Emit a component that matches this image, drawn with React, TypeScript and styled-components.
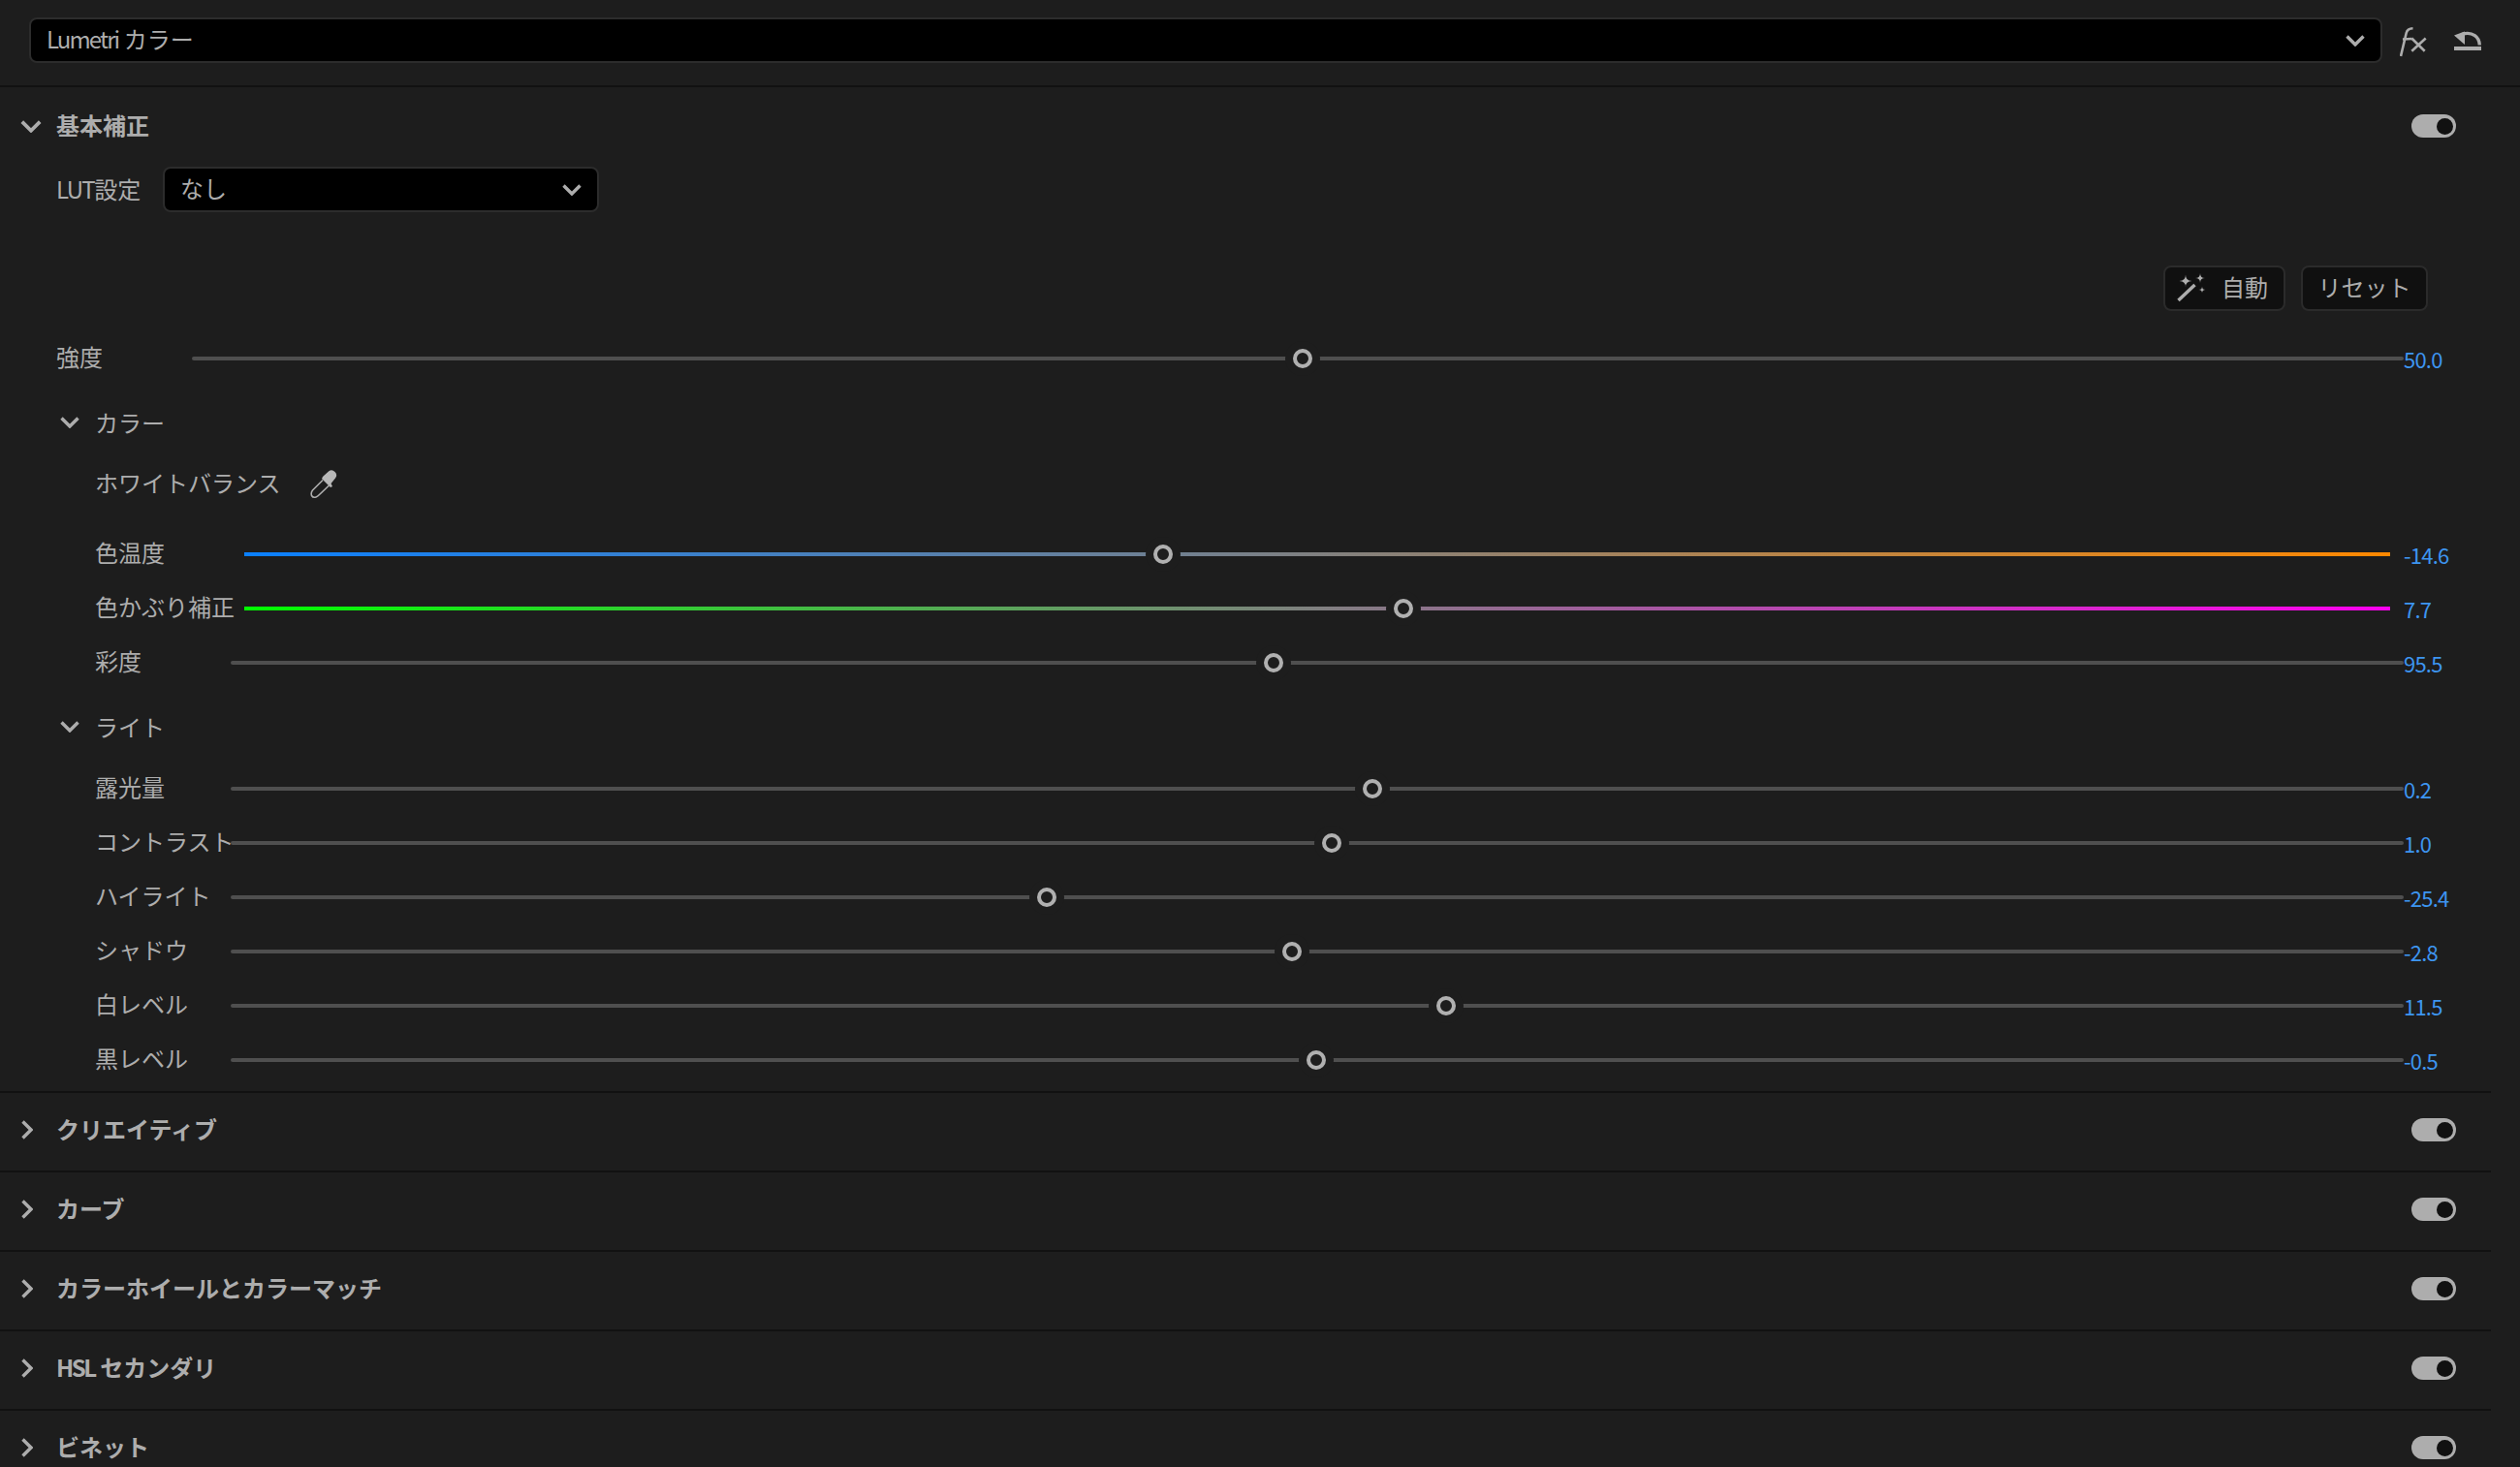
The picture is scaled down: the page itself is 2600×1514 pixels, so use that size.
import styled, { createGlobalStyle } from 'styled-components'

const GlobalStyle = createGlobalStyle`
    html, body {
        margin: 0;
        background: #1d1d1d;
    }
    body {
        font-family: "Noto Sans CJK JP", "Noto Sans", sans-serif;
        font-size: 24px;
        color: #adadad;
    }
`

const Panel = styled.div`
    width: 2600px;
    height: 1514px;
    overflow: hidden;
    background: #1d1d1d;
`

const Toolbar = styled.div`
    display: flex;
    align-items: center;
    height: 47px;
    padding: 18px 40px 23px 30px;
    border-bottom: 2px solid #111;
`

const Select = styled.div<{ $width?: number }>`
    display: flex;
    align-items: center;
    justify-content: space-between;
    box-sizing: border-box;
    height: 47px;
    flex: ${p => (p.$width ? `0 0 ${p.$width}px` : '1')};
    padding: 0 16px 0 16px;
    background: #000;
    border: 2px solid #2c2c2c;
    border-radius: 8px;
    line-height: 1;
`

const SelectText = styled.span`
    padding-bottom: 3px;
`

// latin runs are set narrower than the CJK font's own latin glyphs
const Latin = styled.span<{ $tight: number }>`
    letter-spacing: ${p => p.$tight}px;
`

const ToolIcons = styled.div`
    display: flex;
    align-items: center;
    gap: 28px;
    margin-left: 18px;
`

const FxIcon = styled.svg`
    display: block;
    width: 28px;
    height: 31px;
    margin-top: 4px;
    fill: none;
    stroke: #adadad;
    stroke-width: 2.6;
`

const UndoIcon = styled.svg`
    display: block;
    width: 28px;
    height: 20px;
`

const ChevronIcon = styled.svg<{ $w: number; $h: number }>`
    display: block;
    flex: none;
    width: ${p => p.$w}px;
    height: ${p => p.$h}px;
    fill: none;
    stroke: #adadad;
    stroke-width: 3.4;
`

const Section = styled.section`
    margin-right: 30px;
    padding-bottom: 4px;
    border-bottom: 2px solid #111;
`

const SectionHeader = styled.div<{ $closed?: boolean }>`
    display: flex;
    align-items: center;
    height: ${p => (p.$closed ? 76 : 80)}px;
    padding-right: 36px;
    padding-left: ${p => (p.$closed ? 22 : 21)}px;
    gap: ${p => (p.$closed ? 24 : 15)}px;
`

const SectionTitle = styled.div`
    flex: 1;
    font-weight: 700;
    line-height: 1;
    padding-bottom: 2px;
`

const Toggle = styled.div`
    display: flex;
    align-items: center;
    justify-content: flex-end;
    box-sizing: border-box;
    width: 46px;
    height: 24px;
    padding: 0 3.5px;
    background: #adadad;
    border-radius: 12px;
`

const ToggleKnob = styled.div`
    width: 17px;
    height: 17px;
    background: #111;
    border-radius: 50%;
`

const LutRow = styled.div`
    display: flex;
    align-items: center;
    margin-top: 2px;
    padding-left: 58px;
`

const LutLabel = styled.div`
    width: 110px;
    padding-bottom: 3px;
`

const ButtonRow = styled.div`
    display: flex;
    justify-content: flex-end;
    gap: 16px;
    margin-top: 55px;
    margin-bottom: 21px;
    padding-right: 65px;
`

const ActionButton = styled.div<{ $width: number; $right?: number }>`
    display: flex;
    align-items: center;
    justify-content: center;
    box-sizing: border-box;
    width: ${p => p.$width}px;
    height: 47px;
    padding-right: ${p => p.$right ?? 0}px;
    gap: 16px;
    background: #101010;
    border: 2px solid #2b2b2b;
    border-radius: 8px;
    line-height: 1;
`

const ButtonText = styled.span`
    padding-bottom: 3px;
`

const WandIcon = styled.svg`
    display: block;
    width: 30px;
    height: 32px;
    fill: #adadad;
`

const SliderRow = styled.div<{ $indent: number; $label: number }>`
    display: grid;
    grid-template-columns: ${p => p.$label}px 1fr 90px;
    align-items: center;
    height: 56px;
    padding-left: ${p => p.$indent}px;
`

const SliderLabel = styled.div`
    white-space: nowrap;
    line-height: 1;
    padding-bottom: 5px;
`

const Track = styled.div<{ $gradient?: string }>`
    position: relative;
    height: 4px;
    margin: ${p => (p.$gradient ? '0 14px' : '0')};
    background: ${p => p.$gradient ?? '#4f4f4f'};
    border-radius: ${p => (p.$gradient ? '0' : '2px')};
`

const Thumb = styled.div`
    position: absolute;
    top: 50%;
    box-sizing: border-box;
    width: 20px;
    height: 20px;
    margin: -10px 0 0 -10px;
    background: #1d1d1d;
    border: 4px solid #b0b0b0;
    border-radius: 50%;
    box-shadow: 0 0 0 8px #1d1d1d;
`

const SliderValue = styled.div`
    color: #3d95f0;
    font-size: 22px;
    letter-spacing: -0.8px;
    line-height: 1;
`

const GroupHeader = styled.div`
    display: flex;
    align-items: center;
    height: 56px;
    margin-top: 10px;
    padding-left: 62px;
    gap: 16px;
    line-height: 1;
`

const GroupText = styled.span`
    padding-bottom: 1px;
`

const WhiteBalanceRow = styled.div`
    display: flex;
    align-items: center;
    height: 56px;
    margin-top: 7px;
    padding-left: 98px;
    gap: 28px;
    line-height: 1;
`

const DropperIcon = styled.svg`
    display: block;
    width: 32px;
    height: 32px;
`

const SliderList = styled.div<{ $top: number }>`
    margin-top: ${p => p.$top}px;
`

const TEMP_GRADIENT = 'linear-gradient(90deg, #0a80ff 0%, #808080 50%, #ff8800 100%)'
const TINT_GRADIENT = 'linear-gradient(90deg, #00ff00 0%, #808080 50%, #ff00ee 100%)'

type SliderData = { label: string; value: string; pos: number; gradient?: string }

const colorSliders: SliderData[] = [
    { label: '色温度', value: '-14.6', pos: 0.4282, gradient: TEMP_GRADIENT },
    { label: '色かぶり補正', value: '7.7', pos: 0.5402, gradient: TINT_GRADIENT },
    { label: '彩度', value: '95.5', pos: 0.4799 },
]

const lightSliders: SliderData[] = [
    { label: '露光量', value: '0.2', pos: 0.5254 },
    { label: 'コントラスト', value: '1.0', pos: 0.5067 },
    { label: 'ハイライト', value: '-25.4', pos: 0.3757 },
    { label: 'シャドウ', value: '-2.8', pos: 0.4882 },
    { label: '白レベル', value: '11.5', pos: 0.5593 },
    { label: '黒レベル', value: '-0.5', pos: 0.4996 },
]

const closedSections = [
    { key: 'creative', title: 'クリエイティブ' },
    { key: 'curves', title: 'カーブ' },
    { key: 'wheels', title: 'カラーホイールとカラーマッチ' },
    { key: 'hsl', latin: 'HSL', title: ' セカンダリ' },
    { key: 'vignette', title: 'ビネット' },
]

const ChevronDown = ({ w = 20, h = 12 }: { w?: number; h?: number }) => (
    <ChevronIcon $w={w} $h={h} viewBox="0 0 20 12">
        <path d="M1.5 1.5 L10 10 L18.5 1.5" />
    </ChevronIcon>
)

const ChevronRight = () => (
    <ChevronIcon $w={12} $h={20} viewBox="0 0 12 20">
        <path d="M1.5 1.5 L10 10 L1.5 18.5" />
    </ChevronIcon>
)

const sparkle = (cx: number, cy: number, r: number) =>
    `M${cx} ${cy - r} Q${cx} ${cy} ${cx + r} ${cy} Q${cx} ${cy} ${cx} ${cy + r} Q${cx} ${cy} ${cx - r} ${cy} Q${cx} ${cy} ${cx} ${cy - r}Z`

const Slider = ({ data, indent = 98, label = 140 }: { data: SliderData; indent?: number; label?: number }) => (
    <SliderRow $indent={indent} $label={label}>
        <SliderLabel>{data.label}</SliderLabel>
        <Track $gradient={data.gradient}>
            <Thumb style={{ left: `${data.pos * 100}%` }} />
        </Track>
        <SliderValue>{data.value}</SliderValue>
    </SliderRow>
)

export default function App() {
    return (
        <Panel>
            <GlobalStyle />
            <Toolbar>
                <Select>
                    <SelectText><Latin $tight={-1.9}>Lumetri</Latin> カラー</SelectText>
                    <ChevronDown />
                </Select>
                <ToolIcons>
                    <FxIcon viewBox="0 0 28 31">
                        <path d="M1 30 L6.7 6 Q7.8 1.5 13.5 1.3" />
                        <path d="M3 12.5 L12.5 12" />
                        <path d="M12.3 11.5 L25.7 24.7 M26.7 11.5 L12.3 24.7" />
                    </FxIcon>
                    <UndoIcon viewBox="0 0 28 20">
                        <path d="M26.3 14.5 C26 6 19 0.5 9 3" fill="none" stroke="#adadad" strokeWidth="3.4" />
                        <path d="M0 4.5 L11 0.5 L11 14 Z" fill="#adadad" />
                        <rect x="0" y="16" width="28" height="4" fill="#adadad" />
                    </UndoIcon>
                </ToolIcons>
            </Toolbar>

            <Section>
                <SectionHeader>
                    <ChevronDown w={22} h={13} />
                    <SectionTitle>基本補正</SectionTitle>
                    <Toggle><ToggleKnob /></Toggle>
                </SectionHeader>
                <LutRow>
                    <LutLabel><Latin $tight={-1.6}>LUT</Latin>設定</LutLabel>
                    <Select $width={450}>
                        <SelectText>なし</SelectText>
                        <ChevronDown />
                    </Select>
                </LutRow>
                <ButtonRow>
                    <ActionButton $width={126} $right={4}>
                        <WandIcon viewBox="0 0 30 32">
                            <path d="M1.5 28 L18.5 12" stroke="#adadad" strokeWidth="3.5" />
                            <path d={sparkle(9, 8, 6.5)} />
                            <path d={sparkle(24, 5, 5)} />
                            <path d={sparkle(26, 17, 3.5)} />
                        </WandIcon>
                        <ButtonText>自動</ButtonText>
                    </ActionButton>
                    <ActionButton $width={131}>
                        <ButtonText>リセット</ButtonText>
                    </ActionButton>
                </ButtonRow>
                <Slider data={{ label: '強度', value: '50.0', pos: 0.5022 }} indent={58} label={140} />
                <GroupHeader>
                    <ChevronDown />
                    <GroupText>カラー</GroupText>
                </GroupHeader>
                <WhiteBalanceRow>
                    <SelectText>ホワイトバランス</SelectText>
                    <DropperIcon viewBox="8 2 32 32">
                        <path d="M24 10 L29 5.5 A5 5 0 0 1 36 12.5 L31.5 18 L33 21 L31 22 L22 13 L23 11 Z" fill="#b8b8b8" />
                        <path d="M23 14.5 L12.5 25 Q10.5 27.5 11.5 30.5 Q13 33 16 32 Q17.5 31.5 19.5 29.5 L30 19.5" fill="none" stroke="#adadad" strokeWidth="1.6" />
                    </DropperIcon>
                </WhiteBalanceRow>
                <SliderList $top={17}>
                    {colorSliders.map(s => <Slider key={s.label} data={s} />)}
                </SliderList>
                <GroupHeader>
                    <ChevronDown />
                    <GroupText>ライト</GroupText>
                </GroupHeader>
                <SliderList $top={8}>
                    {lightSliders.map(s => <Slider key={s.label} data={s} />)}
                </SliderList>
            </Section>

            {closedSections.map(s => (
                <Section key={s.key}>
                    <SectionHeader $closed>
                        <ChevronRight />
                        <SectionTitle>
                            {s.latin && <Latin $tight={-2.4}>{s.latin}</Latin>}
                            {s.title}
                        </SectionTitle>
                        <Toggle><ToggleKnob /></Toggle>
                    </SectionHeader>
                </Section>
            ))}
        </Panel>
    )
}
